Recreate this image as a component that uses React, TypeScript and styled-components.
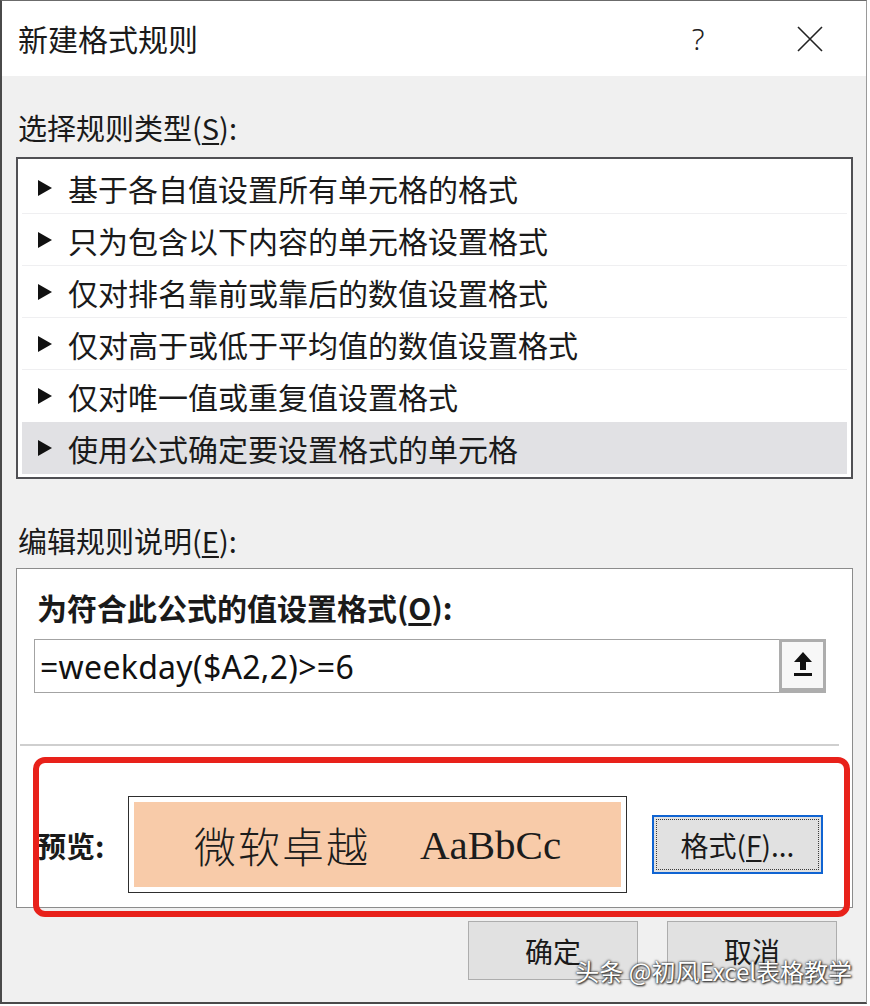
import React from 'react';
import styled, { createGlobalStyle } from 'styled-components';

const GlobalStyle = createGlobalStyle`
  html, body {
    margin: 0;
    padding: 0;
    background: #ffffff;
  }
  body {
    font-family: "Noto Sans CJK SC", "Noto Sans", sans-serif;
    color: #1a1a1a;
  }
`;

const Window = styled.div`
  position: relative;
  width: 867px;
  height: 1004px;
  box-sizing: border-box;
  border-top: 1px solid #6b6b6b;
  border-left: 2px solid #4a4a4a;
  border-right: 1px solid #9a9a9a;
  border-bottom: 2px solid #4a4a4a;
  background: #f0f0f0;
  display: flex;
  flex-direction: column;
`;

const TitleBar = styled.div`
  height: 75px;
  background: #ffffff;
  display: flex;
  align-items: center;
  padding: 0 0 0 16px;
  flex-shrink: 0;
`;

const Title = styled.div`
  flex: 1;
  font-size: 30px;
  line-height: 40px;
  margin-top: -1px;
`;

const TitleButton = styled.div`
  width: 112px;
  display: flex;
  align-items: center;
  justify-content: center;
  font-family: "Noto Sans", sans-serif;
  font-weight: 300;
  font-size: 30px;
  color: #222;
`;

const Body = styled.div`
  padding: 31px 13px 0 14px;
  display: flex;
  flex-direction: column;
`;

const SectionLabel = styled.div<{ $gap: number }>`
  font-size: 29px;
  line-height: 40px;
  padding-left: 2px;
  margin-bottom: ${(p) => p.$gap}px;
  u {
    text-decoration: underline;
    text-underline-offset: 3px;
  }
`;

const RuleList = styled.div`
  border: 2px solid #505054;
  background: #ffffff;
  padding: 3px 4px;
  margin-bottom: 41px;
`;

const RuleRow = styled.div<{ $selected?: boolean; $last?: boolean }>`
  height: 52px;
  box-sizing: border-box;
  display: flex;
  align-items: center;
  padding-left: 16px;
  gap: 16px;
  font-size: 30px;
  background: ${(p) => (p.$selected ? '#e1e1e4' : 'transparent')};
  border-bottom: ${(p) => (p.$last ? 'none' : '1px solid #efeff1')};
`;

const EditBox = styled.div`
  position: relative;
  border: 1px solid #8c8c8c;
  background: #ffffff;
  padding: 18px 26px 14px 17px;
  height: 340px;
  box-sizing: border-box;
  display: flex;
  flex-direction: column;
`;

const BoldLabel = styled.div`
  font-size: 30px;
  line-height: 40px;
  font-weight: 700;
  padding-left: 3px;
  margin-bottom: 12px;
  u {
    text-decoration: underline;
    text-underline-offset: 3px;
  }
`;

const FormulaRow = styled.div`
  display: flex;
  height: 54px;
`;

const FormulaInput = styled.div`
  flex: 1;
  border: 1px solid #a3a3a3;
  border-right: none;
  display: flex;
  align-items: center;
  padding-left: 5px;
  font-family: "Noto Sans", "Open Sans", sans-serif;
  font-size: 32px;
  letter-spacing: 0.3px;
  color: #111;
`;

const CollapseButton = styled.div`
  width: 47px;
  box-sizing: border-box;
  border: 3px solid #adadad;
  border-bottom-width: 5px;
  background: #f7f7f7;
  display: flex;
  align-items: center;
  justify-content: center;
`;

const Divider = styled.div`
  height: 2px;
  background: #cfcfcf;
  margin: 51px -13px 50px -14px;
`;

const PreviewRow = styled.div`
  display: flex;
  align-items: center;
  height: 97px;
`;

const PreviewLabel = styled.div`
  width: 94px;
  padding-left: 3px;
  box-sizing: border-box;
  font-size: 29px;
  font-weight: 700;
`;

const PreviewBox = styled.div`
  width: 499px;
  height: 97px;
  box-sizing: border-box;
  border: 1px solid #2e2e2e;
  padding: 5px;
  background: #ffffff;
`;

const PreviewFill = styled.div`
  height: 100%;
  background: #f8cba9;
  display: flex;
  align-items: center;
  justify-content: center;
  gap: 50px;
  color: #1c1c1c;
`;

const PreviewCjk = styled.span`
  font-family: "Noto Sans CJK SC", sans-serif;
  font-weight: 300;
  font-size: 42px;
  letter-spacing: 2px;
`;

const PreviewLatin = styled.span`
  font-family: "Liberation Serif", "DejaVu Serif", serif;
  font-size: 41px;
`;

const FormatButton = styled.div`
  margin-left: 25px;
  width: 171px;
  height: 59px;
  box-sizing: border-box;
  border: 2px solid #1064d2;
  background: #e1e1e1;
  outline: 1px dotted #3a3a3a;
  outline-offset: -5px;
  display: flex;
  align-items: center;
  justify-content: center;
  font-size: 28px;
  u {
    text-decoration: underline;
    text-underline-offset: 3px;
  }
`;

const Annotation = styled.div`
  position: absolute;
  left: 16px;
  top: 188px;
  width: 817px;
  height: 160px;
  box-sizing: border-box;
  border: 6px solid #e8211a;
  border-radius: 12px;
  pointer-events: none;
`;

const Footer = styled.div`
  display: flex;
  justify-content: flex-end;
  gap: 29px;
  padding: 13px 16px 0 0;
`;

const DialogButton = styled.div`
  width: 170px;
  height: 59px;
  box-sizing: border-box;
  border: 1px solid #adadad;
  background: #e1e1e1;
  display: flex;
  align-items: center;
  justify-content: center;
  font-size: 28px;
`;

const Watermark = styled.div`
  position: absolute;
  right: 14px;
  bottom: 16px;
  font-size: 24px;
  line-height: 30px;
  color: #ffffff;
  text-shadow: 0 0 2px #333, 0 0 3px #555, 1px 1px 2px #222;
`;

const Triangle = () => (
  <svg width="14" height="16" viewBox="0 0 14 16">
    <polygon points="0,0 14,8 0,16" fill="#111" />
  </svg>
);

const CloseIcon = () => (
  <svg width="26" height="26" viewBox="0 0 26 26">
    <path d="M1 1 L25 25 M25 1 L1 25" stroke="#222" strokeWidth="1.6" fill="none" />
  </svg>
);

const UploadIcon = () => (
  <svg width="20" height="26" viewBox="0 0 20 26">
    <polygon points="10,0 19,10 13,10 13,18 7,18 7,10 1,10" fill="#111" />
    <rect x="1" y="21" width="18" height="3" fill="#111" />
  </svg>
);

const rules = [
  '基于各自值设置所有单元格的格式',
  '只为包含以下内容的单元格设置格式',
  '仅对排名靠前或靠后的数值设置格式',
  '仅对高于或低于平均值的数值设置格式',
  '仅对唯一值或重复值设置格式',
  '使用公式确定要设置格式的单元格',
];

export default function App() {
  return (
    <>
      <GlobalStyle />
      <Window>
        <TitleBar>
          <Title>新建格式规则</Title>
          <TitleButton>?</TitleButton>
          <TitleButton>
            <CloseIcon />
          </TitleButton>
        </TitleBar>
        <Body>
          <SectionLabel $gap={10}>
            选择规则类型(<u>S</u>):
          </SectionLabel>
          <RuleList>
            {rules.map((r, i) => (
              <RuleRow key={r} $selected={i === rules.length - 1} $last={i >= rules.length - 2}>
                <Triangle />
                <span>{r}</span>
              </RuleRow>
            ))}
          </RuleList>
          <SectionLabel $gap={8}>
            编辑规则说明(<u>E</u>):
          </SectionLabel>
          <EditBox>
            <BoldLabel>
              为符合此公式的值设置格式(<u>O</u>):
            </BoldLabel>
            <FormulaRow>
              <FormulaInput>=weekday($A2,2)&gt;=6</FormulaInput>
              <CollapseButton>
                <UploadIcon />
              </CollapseButton>
            </FormulaRow>
            <Divider />
            <PreviewRow>
              <PreviewLabel>预览:</PreviewLabel>
              <PreviewBox>
                <PreviewFill>
                  <PreviewCjk>微软卓越</PreviewCjk>
                  <PreviewLatin>AaBbCc</PreviewLatin>
                </PreviewFill>
              </PreviewBox>
              <FormatButton>
                格式(<u>F</u>)...
              </FormatButton>
            </PreviewRow>
            <Annotation />
          </EditBox>
          <Footer>
            <DialogButton>确定</DialogButton>
            <DialogButton>取消</DialogButton>
          </Footer>
        </Body>
        <Watermark>头条 @初风Excel表格教学</Watermark>
      </Window>
    </>
  );
}
